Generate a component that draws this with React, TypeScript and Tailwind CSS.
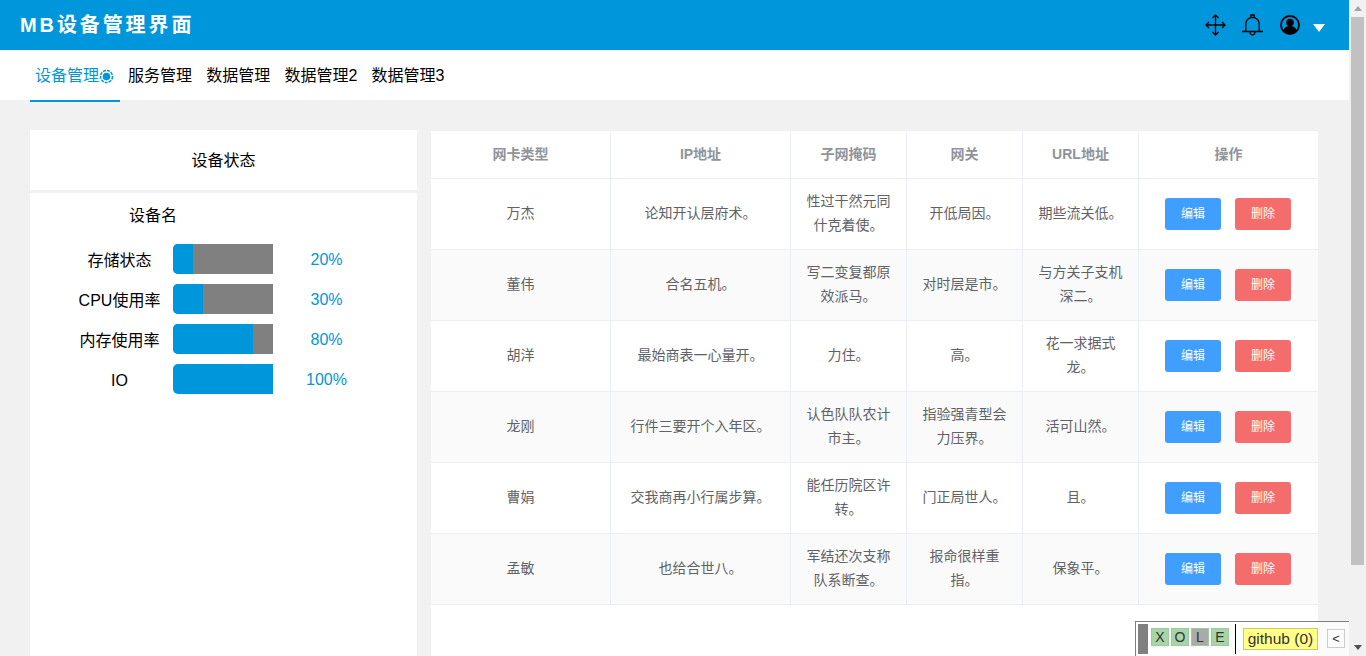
const F = '"Liberation Sans","Noto Sans CJK SC",sans-serif';

const rows = [
  ['万杰', '论知开认层府术。', '性过干然元同什克着使。', '开低局因。', '期些流关低。'],
  ['董伟', '合名五机。', '写二变复都原效派马。', '对时层是市。', '与方关子支机深二。'],
  ['胡洋', '最始商表一心量开。', '力住。', '高。', '花一求据式龙。'],
  ['龙刚', '行件三要开个入年区。', '认色队队农计市主。', '指验强青型会力压界。', '活可山然。'],
  ['曹娟', '交我商再小行属步算。', '能任历院区许转。', '门正局世人。', '且。'],
  ['孟敏', '也给合世八。', '军结还次支称队系断查。', '报命很样重指。', '保象平。'],
];

const bars = [
  { name: '存储状态', v: 20 },
  { name: 'CPU使用率', v: 30 },
  { name: '内存使用率', v: 80 },
  { name: 'IO', v: 100 },
];

const cols = ['w-[180px]', 'w-[180px]', 'w-[116px]', 'w-[116px]', 'w-[116px]'];
const heads = ['网卡类型', 'IP地址', '子网掩码', '网关', 'URL地址'];

function Header() {
  return (
    <div className="h-[50px] bg-[#0096db] flex items-center justify-between pl-5 pr-[24px] shrink-0">
      <div className="text-[20px] font-bold text-white tracking-[2.9px]">MB设备管理界面</div>
      <div className="flex items-center">
        <svg width="21" height="22" viewBox="0 0 21 22" fill="none" stroke="#000" strokeWidth="1.3" className="mr-[16px]">
          <path d="M10.500 1v20M1 11h19" />
          <path d="M7.500 4l3-3 3 3M7.500 18l3 3 3-3M4 8l-3 3 3 3M17 8l3 3-3 3" />
        </svg>
        <svg width="21" height="22" viewBox="0 0 21 22" fill="none" stroke="#000" strokeWidth="1.3" className="mr-[17px]">
          <path d="M0 17.500h21M3.800 17.500V10a6.700 6.700 0 0 1 13.400 0v7.500M8.800 3.400V1h3.400v2.400M8 17.500c0 4.500 5 4.500 5 0" />
        </svg>
        <svg width="20" height="20" viewBox="0 0 20 20" className="mr-[13px]">
          <circle cx="10" cy="10" r="9" fill="none" stroke="#000" strokeWidth="1.800" />
          <circle cx="10" cy="7.500" r="3.800" fill="#000" />
          <path d="M3.500 15.500c1-3.500 3.500-4.500 6.500-4.500s5.500 1 6.500 4.500c-1.500 2-4 3-6.500 3s-5-1-6.500-3z" fill="#000" />
        </svg>
        <svg width="12" height="8" viewBox="0 0 12 8" className="mt-[6px]"><path d="M0 0h12L6 8z" fill="#fff" /></svg>
      </div>
    </div>
  );
}

function Nav() {
  return (
    <div className="h-[50px] bg-white flex pl-[30px] text-[16px] text-black shrink-0">
      <div className="w-[90px] h-[52px] border-b-2 border-[#0096db] text-[#0096db] flex items-center pl-[5px] pt-[2px]">
        设备管理
        <svg width="15" height="15" viewBox="0 0 15 15">
          <circle cx="7.500" cy="7.500" r="3.800" fill="#0096db" />
          <circle cx="7.500" cy="7.500" r="6" fill="none" stroke="#0096db" strokeWidth="1.500" strokeDasharray="3 1" />
        </svg>
      </div>
      <div className="flex items-center gap-[14.200px] pl-2 pt-[1px]">
        <span>服务管理</span>
        <span>数据管理</span>
        <span>数据管理2</span>
        <span>数据管理3</span>
      </div>
    </div>
  );
}

function Status() {
  return (
    <div className="w-[387px] h-[600px] bg-white shrink-0">
      <div className="h-[60px] flex items-center justify-center text-[16px] text-black pt-[2px]">设备状态</div>
      <div className="h-[3px] bg-[#f1f1f1]" />
      <div className="w-[246px] h-[44px] flex items-center justify-center text-[16px] text-black pt-[2px]">设备名</div>
      <div className="mt-[7px] flex flex-col gap-[10px]">
        {bars.map((b) => (
          <div key={b.name} className="flex items-center h-[30px]">
            <div className="w-[143px] pl-[36px] pt-[3px] text-center text-[16px] text-black leading-none whitespace-nowrap">{b.name}</div>
            <div className="w-[100px] h-[30px] bg-[#808080] rounded-l-[5px] overflow-hidden">
              <div className="h-full bg-[#0096db]" style={{ width: `${b.v}%` }} />
            </div>
            <div className="w-[107px] pt-[2px] text-center text-[16px] text-[#0096db]">{b.v}%</div>
          </div>
        ))}
      </div>
    </div>
  );
}

function Table() {
  return (
    <div className="w-[887px] h-[600px] bg-white shrink-0">
      <div className="flex h-[49px] border-y border-[#ebeef5] text-[14px] font-bold text-[#909399]">
        {heads.map((h, i) => (
          <div key={h} className={`${cols[i]} border-r border-[#ebeef5] flex items-center justify-center`}>{h}</div>
        ))}
        <div className="w-[179px] flex items-center justify-center">操作</div>
      </div>
      {rows.map((r, idx) => (
        <div key={r[0]} className={`flex h-[71px] border-b border-[#ebeef5] text-[14px] text-[#606266] ${idx % 2 ? 'bg-[#fafafa]' : 'bg-white'}`}>
          {r.map((t, i) => (
            <div key={i} className={`${cols[i]} border-r border-[#ebeef5] flex items-center justify-center text-center px-[15px] leading-[24px] pb-[2px]`}>
              <span>{t}</span>
            </div>
          ))}
          <div className="w-[179px] flex items-center pl-[26px] gap-[14px] text-[12px] text-white">
            <button className="w-[56px] h-[32px] bg-[#409eff] rounded-[3px]">编辑</button>
            <button className="w-[56px] h-[32px] bg-[#f56c6c] rounded-[3px]">删除</button>
          </div>
        </div>
      ))}
    </div>
  );
}

function Scrollbar() {
  return (
    <div className="w-[17px] h-[656px] bg-[#f1f1f1] flex flex-col items-center shrink-0">
      <div className="h-[17px] flex items-center justify-center">
        <svg width="8" height="5" viewBox="0 0 8 5"><path d="M0 5L4 0l4 5z" fill="#a3a3a3" /></svg>
      </div>
      <div className="w-[13px] h-[548px] bg-[#c1c1c1]" />
      <div className="mt-auto h-[17px] flex items-center justify-center">
        <svg width="8" height="5" viewBox="0 0 8 5"><path d="M0 0L4 5l4-5z" fill="#505050" /></svg>
      </div>
    </div>
  );
}

function Widget() {
  return (
    <div className="absolute left-[1135px] top-[621px] w-[214px] h-[35px] border-l border-t border-[#808080] bg-white/70 flex items-start pl-[2px] pt-[2px] text-[#333]">
      <div className="w-[10px] h-[30px] bg-[#808080] mr-[3px]" />
      <div className="flex gap-[2px] mt-[4px] text-[14px]">
        {['X', 'O', 'L', 'E'].map((c) => (
          <div key={c} className={`w-[18px] h-[18px] flex items-center justify-center ${c === 'L' ? 'bg-[#aaaaaa]' : 'bg-[#a8d5a8]'} border border-[#99cc99]`}>{c}</div>
        ))}
      </div>
      <div className="w-px h-[30px] bg-black ml-[6px] mr-[7px]" />
      <div className="mt-[4px] h-[22px] w-[75px] bg-[#ffff88] border border-[#cccc66] flex items-center justify-center text-[15.500px]">github (0)</div>
      <div className="ml-[9px] mt-[5px] w-[18px] h-[19px] bg-white/50 border border-[#cccccc] flex items-center justify-center text-[13px]">&lt;</div>
    </div>
  );
}

export default function App() {
  return (
    <div className="relative h-[656px] w-[1366px] overflow-hidden flex bg-[#f1f1f1]" style={{ fontFamily: F }}>
      <div className="w-[1349px] flex flex-col shrink-0">
        <Header />
        <Nav />
        <div className="flex gap-[14px] pl-[30px] pt-[30px]">
          <Status />
          <Table />
        </div>
      </div>
      <Scrollbar />
      <Widget />
    </div>
  );
}
